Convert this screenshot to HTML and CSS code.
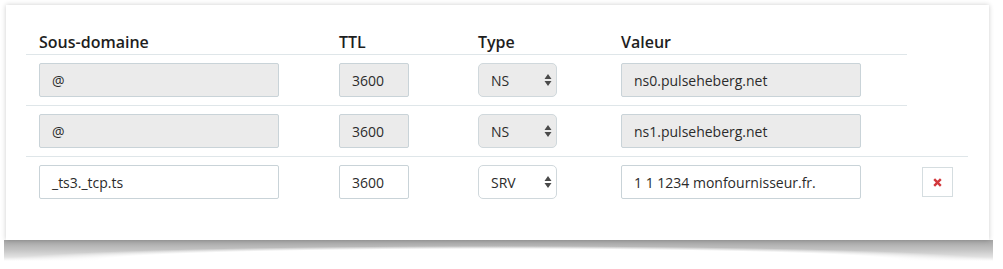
FILE: index.html
```html
<!DOCTYPE html>
<html>
<head lang="fr">
    <meta charset="UTF-8">
    <title>Zone DNS</title>
    <link rel="stylesheet" href="styles.css">
</head>
<body>
<div class="page">
<div class="card">
    <div class="row head">
        <div class="cell">Sous-domaine</div>
        <div class="cell">TTL</div>
        <div class="cell">Type</div>
        <div class="cell">Valeur</div>
    </div>
    <div class="row">
        <div class="cell"><div class="field wide off">@</div></div>
        <div class="cell"><div class="field ttl off">3600</div></div>
        <div class="cell">
            <div class="select off">NS
                <svg class="arrows" width="8" height="12" viewBox="0 0 8 12"><path d="M4 0 L7.5 5 H0.5 Z M4 12 L7.5 7 H0.5 Z" fill="#4a4a4a"/></svg>
            </div>
        </div>
        <div class="cell"><div class="field wide off">ns0.pulseheberg.net</div></div>
    </div>
    <div class="row">
        <div class="cell"><div class="field wide off">@</div></div>
        <div class="cell"><div class="field ttl off">3600</div></div>
        <div class="cell">
            <div class="select off">NS
                <svg class="arrows" width="8" height="12" viewBox="0 0 8 12"><path d="M4 0 L7.5 5 H0.5 Z M4 12 L7.5 7 H0.5 Z" fill="#4a4a4a"/></svg>
            </div>
        </div>
        <div class="cell"><div class="field wide off">ns1.pulseheberg.net</div></div>
    </div>
    <div class="row edit">
        <div class="cell"><div class="field wide">_ts3._tcp.ts</div></div>
        <div class="cell"><div class="field ttl">3600</div></div>
        <div class="cell">
            <div class="select">SRV
                <svg class="arrows" width="8" height="12" viewBox="0 0 8 12"><path d="M4 0 L7.5 5 H0.5 Z M4 12 L7.5 7 H0.5 Z" fill="#4a4a4a"/></svg>
            </div>
        </div>
        <div class="cell"><div class="field wide">1 1 1234 monfournisseur.fr.</div></div>
        <div class="cell del-cell">
            <div class="del">
                <svg width="9" height="9" viewBox="0 0 9 9"><path d="M1.2 1.2 L7.8 7.8 M7.8 1.2 L1.2 7.8" stroke="#d2383c" stroke-width="2.4"/></svg>
            </div>
        </div>
    </div>
</div>
<div class="curl"></div>
</div>
</body>
</html>
```

FILE: styles.css
```css
*{
    padding: 0;
    margin: 0;
    box-sizing: border-box;
}
html, body{
    background: #fff;
}
body{
    font-family: "Open Sans", "Liberation Sans", sans-serif;
    font-size: 14px;
    color: #333;
}
.page{
    height: 269px;
    padding: 5px 0 0 4px;
}
.card{
    width: 983px;
    height: 235px;
    margin-left: 2px;
    padding: 27px 20px 0;
    background: #fff;
    box-shadow: 0 0 5px rgba(0,0,0,.2);
}
/* ombre recourbee sous la carte : plus haute aux coins */
.curl{
    width: 989px;
    height: 21px;
    background:
        radial-gradient(ellipse 500px 15px at 50% 100%, #fff 80%, rgba(255,255,255,0) 100%),
        linear-gradient(to bottom, rgba(0,0,0,.36), rgba(0,0,0,.24) 45%, rgba(0,0,0,.12) 80%, rgba(0,0,0,0));
}
.row{
    display: grid;
    grid-template-columns: 300px 139px 143px 299px;
    width: max-content;
    border-top: 1px solid #dfe6e9;
}
.row.head{
    border-top: 0;
    border-bottom: 1px solid #dfe6e9;
}
.row.head + .row{
    border-top: 0;
}
.row.edit{
    grid-template-columns: 300px 139px 143px 299px 61px;
}
.cell{
    padding: 8px 13px;
}
.head .cell{
    padding: 0 13px 2px;
    font-size: 16px;
    font-weight: 600;
    line-height: 20px;
    color: #1e1e1e;
}
.field, .select{
    height: 34px;
    line-height: 33px;
    padding: 0 12px;
    border: 1px solid #c9d3d8;
    border-radius: 2px;
    background: #fff;
    white-space: nowrap;
    color: #2b2b2b;
}
.field.wide{
    width: 240px;
}
.field.ttl{
    width: 70px;
}
.off{
    background: #ebebeb;
}
.select{
    position: relative;
    width: 79px;
    border-radius: 5px;
    border-color: #d0d8dc;
}
.arrows{
    position: absolute;
    right: 4px;
    top: 10px;
}
.del-cell{
    padding: 10px 0 0 15px;
}
.del{
    display: flex;
    align-items: center;
    justify-content: center;
    width: 31px;
    height: 30px;
    border: 1px solid #d5dde0;
    background: #fff;
}
```
